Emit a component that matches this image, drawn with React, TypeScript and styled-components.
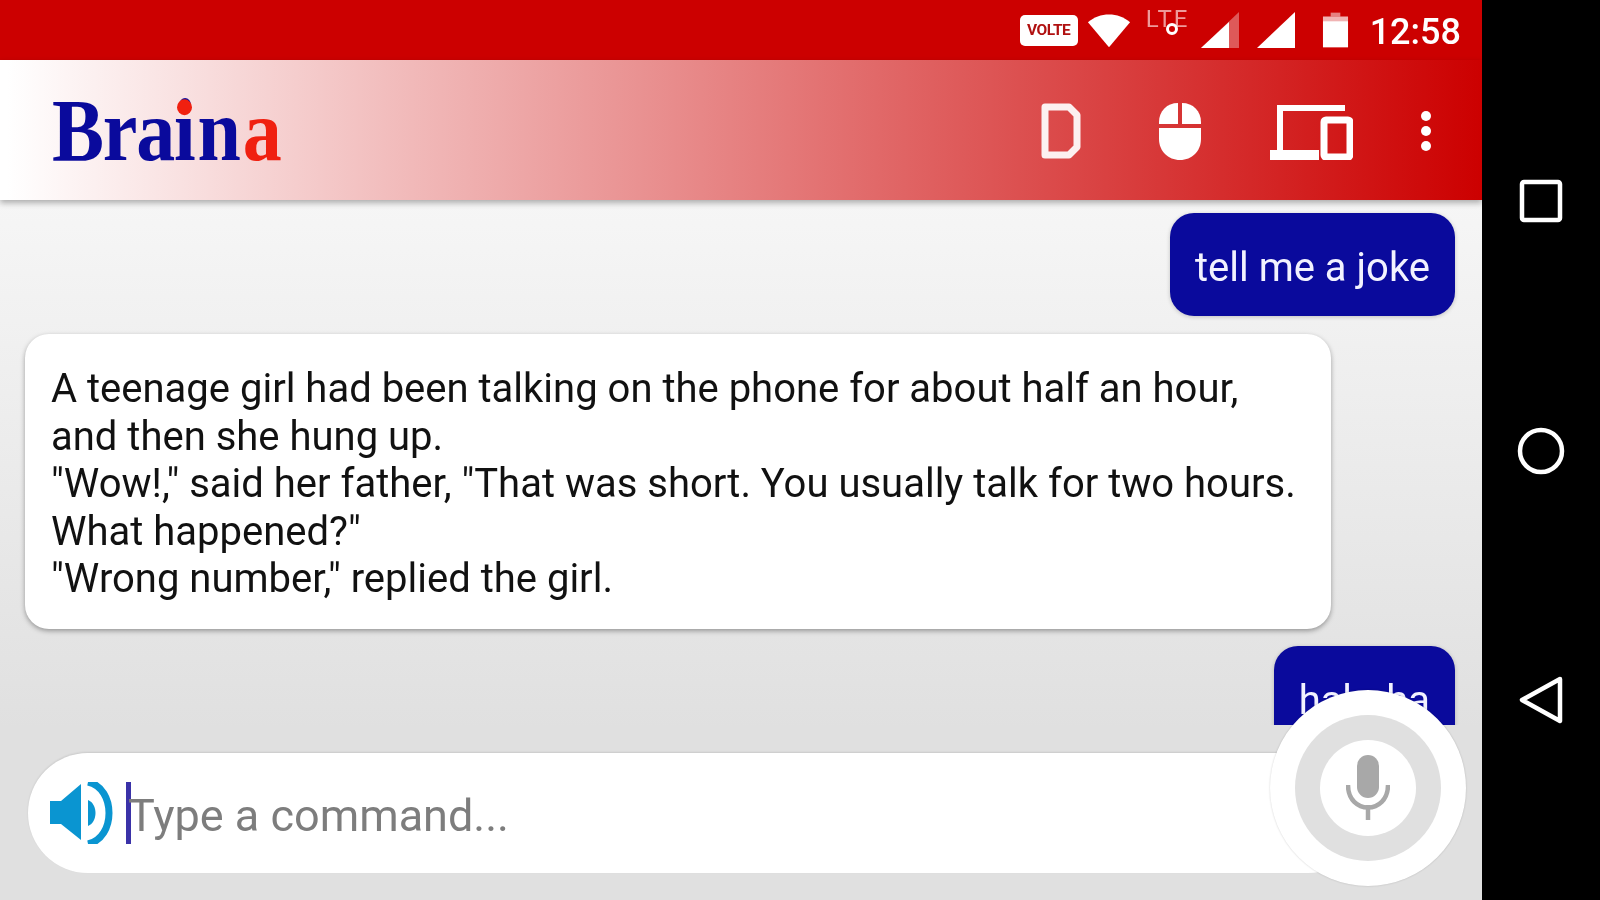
import styled, { createGlobalStyle, css } from "styled-components"

const GlobalStyle = createGlobalStyle`
  html, body {
    margin: 0;
    padding: 0;
    background: #000;
    overflow: hidden;
  }
  * {
    box-sizing: border-box;
  }
`

// the reference is an upscaled capture, so its parts all look a little soft
const soft = css`
  filter: blur(0.7px);
`

export default function App() {
  return (
    <Root>
      <GlobalStyle />
      <Screen>
        <StatusBar>
          <VolteBadge>VOLTE</VolteBadge>
          <StatusSlot $left={9}>
            <WifiIcon />
          </StatusSlot>
          <StatusSlot $left={15}>
            <LteIcon>
              LTE
              <LteDot />
            </LteIcon>
          </StatusSlot>
          <StatusSlot $left={11}>
            <SignalIcon faded />
          </StatusSlot>
          <StatusSlot $left={18}>
            <SignalIcon />
          </StatusSlot>
          <StatusSlot $left={27}>
            <BatteryIcon />
          </StatusSlot>
          <Clock>12:58</Clock>
        </StatusBar>
        <AppBar>
          <Logo>
            <LogoTight>Bra</LogoTight>
            <LogoLoose>in</LogoLoose>
            <LogoEnd>a</LogoEnd>
            <LogoDot />
          </Logo>
          <Actions>
            <DIcon />
            <MouseIcon />
            <DevicesIcon />
            <DotsIcon />
          </Actions>
        </AppBar>
        <Chat>
          <UserBubble>tell me a joke</UserBubble>
          <BotBubble>
            A teenage girl had been talking on the phone for about half an hour,
            <br />
            and then she hung up.
            <br />
            "Wow!," said her father, "That was short. You usually talk for two hours.
            <br />
            What happened?"
            <br />
            "Wrong number," replied the girl.
          </BotBubble>
          <UserBubble $last>hahaha</UserBubble>
        </Chat>
        <InputBar>
          <InputPill>
            <SpeakerIcon />
            <Caret />
            <Placeholder>Type a command...</Placeholder>
          </InputPill>
          <MicButton>
            <MicRing>
              <MicFace>
                <MicIcon />
              </MicFace>
            </MicRing>
          </MicButton>
        </InputBar>
      </Screen>
      <NavBar>
        <svg width="44" height="44" viewBox="0 0 44 44">
          <rect x="3" y="3" width="38" height="38" rx="2" fill="none" stroke="#fff" strokeWidth="4.5" />
        </svg>
        <svg width="50" height="50" viewBox="0 0 50 50">
          <circle cx="25" cy="25" r="21" fill="none" stroke="#fff" strokeWidth="4.5" />
        </svg>
        <svg width="46" height="50" viewBox="0 0 46 50">
          <path d="M42 4 L4 25 L42 46 Z" fill="none" stroke="#fff" strokeWidth="4.5" strokeLinejoin="round" />
        </svg>
      </NavBar>
    </Root>
  )
}

function WifiIcon() {
  return (
    <svg width="44" height="36" viewBox="0 0 46 36">
      <path d="M1 10 C13 -1 33 -1 45 10 L23 36 Z" fill="#fff" />
    </svg>
  )
}

function SignalIcon({ faded }: { faded?: boolean }) {
  return (
    <svg width="38" height="36" viewBox="0 0 38 36">
      {faded ? (
        <>
          <path d="M0 36 L38 0 V36 Z" fill="#fff" opacity="0.35" />
          <path d="M0 36 L28 10 V36 Z" fill="#fff" />
        </>
      ) : (
        <path d="M0 36 L38 0 V36 Z" fill="#fff" />
      )}
    </svg>
  )
}

function BatteryIcon() {
  return (
    <svg width="27" height="36" viewBox="0 0 28 36">
      <path d="M9 0 H19 V4 H9 Z" fill="#fff" opacity="0.5" />
      <path d="M1 4 H27 V10 H1 Z" fill="#fff" opacity="0.7" />
      <path d="M1 9 H27 V36 H1 Z" fill="#fff" />
    </svg>
  )
}

function DIcon() {
  return (
    <svg width="40" height="56" viewBox="0 0 40 56">
      <path
        d="M4 4 H28 L36 12 V44 L28 52 H4 Z"
        fill="none"
        stroke="#fff"
        strokeWidth="7"
        strokeLinejoin="round"
        opacity="0.92"
      />
    </svg>
  )
}

function MouseIcon() {
  return (
    <svg width="44" height="58" viewBox="0 0 44 58">
      <path d="M20 1 C9 1 1 9 1 20 V22 H20 Z" fill="#fff" />
      <path d="M24 1 C35 1 43 9 43 20 V22 H24 Z" fill="#fff" />
      <path d="M1 26 H43 V37 C43 49 34 58 22 58 C10 58 1 49 1 37 Z" fill="#fff" />
    </svg>
  )
}

function DevicesIcon() {
  return (
    <svg width="84" height="58" viewBox="0 0 84 58">
      <path d="M11 6 H76" stroke="#fff" strokeWidth="6" fill="none" />
      <path d="M11 3 V48" stroke="#fff" strokeWidth="6" fill="none" />
      <path d="M1 48 H50 V58 H1 Z" fill="#fff" />
      <rect x="55" y="18" width="26" height="37" rx="2" fill="none" stroke="#fff" strokeWidth="7" />
    </svg>
  )
}

function DotsIcon() {
  return (
    <svg width="16" height="44" viewBox="0 0 16 44">
      <circle cx="8" cy="7" r="5" fill="#fff" />
      <circle cx="8" cy="22" r="5" fill="#fff" />
      <circle cx="8" cy="37" r="5" fill="#fff" />
    </svg>
  )
}

function SpeakerIcon() {
  return (
    <svg width="64" height="62" viewBox="0 0 64 62">
      <path d="M0 19 H11 L31 2 V58 L11 42 H0 Z" fill="#0a95d1" />
      <path d="M38 0 C66 6 66 56 38 62" fill="none" stroke="#0a95d1" strokeWidth="7" />
      <path d="M38 18 C48 22 48 40 38 44 Z" fill="#0a95d1" />
    </svg>
  )
}

function MicIcon() {
  return (
    <svg width="44" height="66" viewBox="0 0 44 66">
      <rect x="11" y="0" width="22" height="43" rx="11" fill="#a8a8a8" />
      <path d="M2 30 C2 60 42 60 42 30" fill="none" stroke="#a8a8a8" strokeWidth="4.5" />
      <path d="M22 50 V65" stroke="#a8a8a8" strokeWidth="4.5" fill="none" />
    </svg>
  )
}

const Root = styled.div`
  display: flex;
  width: 1600px;
  height: 900px;
  overflow: hidden;
  font-family: Roboto, "Liberation Sans", sans-serif;
`

const Screen = styled.div`
  position: relative;
  display: flex;
  flex-direction: column;
  width: 1482px;
  height: 900px;
  background: linear-gradient(180deg, #f6f6f6 200px, #e0e0e0 730px, #dedede 100%);
`

const NavBar = styled.nav`
  display: flex;
  flex-direction: column;
  align-items: center;
  flex: 1;
  gap: 200px;
  padding-top: 179px;
  background: #000;

  svg {
    ${soft}
  }

  svg:nth-child(2) {
    margin-top: 3px;
  }

  svg:nth-child(3) {
    margin-top: -1px;
  }
`

const StatusBar = styled.div`
  display: flex;
  align-items: center;
  justify-content: flex-end;
  height: 60px;
  padding-right: 21px;
  background: #cc0000;
`

const StatusSlot = styled.div<{ $left: number }>`
  display: flex;
  margin-left: ${(p) => p.$left}px;
  ${soft}
`

const VolteBadge = styled.div`
  width: 58px;
  height: 31px;
  border-radius: 5px;
  background: #fff;
  color: #b01010;
  font-size: 15.5px;
  font-weight: 700;
  line-height: 31px;
  text-align: center;
  letter-spacing: -0.5px;
  ${soft}
`

const LteIcon = styled.div`
  position: relative;
  width: 44px;
  margin-bottom: 22px;
  color: #ee9a9a;
  font-size: 24px;
  line-height: 26px;
  letter-spacing: 2px;
  text-align: center;
`

const LteDot = styled.div`
  position: absolute;
  left: 20px;
  top: 17px;
  width: 12px;
  height: 12px;
  border-radius: 50%;
  border: 3px solid #fff;
`

const Clock = styled.div`
  margin-left: 21px;
  color: #fff;
  font-size: 36px;
  font-weight: 500;
  line-height: 60px;
  padding-top: 3px;
  ${soft}
`

const AppBar = styled.header`
  position: relative;
  z-index: 2;
  display: flex;
  align-items: center;
  justify-content: space-between;
  height: 140px;
  padding: 0 48px 0 52px;
  background: linear-gradient(90deg, #ffffff 0.5%, #cc0000 100%);
  box-shadow: 0 3px 6px rgba(0, 0, 0, 0.3);
`

const Logo = styled.div`
  position: relative;
  color: #0a0a9c;
  font-family: "Liberation Serif", serif;
  font-size: 78px;
  font-weight: 700;
  line-height: 1;
  margin-top: 2px;
  transform: scaleY(1.13);
  ${soft}
`

const LogoTight = styled.span`
  letter-spacing: -1.2px;
`

const LogoLoose = styled.span`
  letter-spacing: 1.8px;
`

const LogoEnd = styled.span`
  color: #f02010;
`

const LogoDot = styled.div`
  position: absolute;
  left: 125px;
  top: 11px;
  width: 15px;
  height: 14px;
  border-radius: 50%;
  background: #f02010;
`

const Actions = styled.div`
  display: flex;
  align-items: center;
  gap: 69px;
  margin-top: 1px;
  ${soft}

  svg:nth-child(1) {
    margin-right: 8px;
  }

  svg:nth-child(2) {
    margin-right: -2px;
  }

  svg:nth-child(3) {
    margin-right: -4px;
  }
`

const Chat = styled.main`
  display: flex;
  flex: 1;
  flex-direction: column;
  align-items: flex-start;
  min-height: 0;
  padding: 13px 27px 0 25px;
  overflow: hidden;
`

const UserBubble = styled.div<{ $last?: boolean }>`
  flex-shrink: 0;
  align-self: flex-end;
  height: 103px;
  margin-top: ${(p) => (p.$last ? "17px" : "0")};
  margin-bottom: ${(p) => (p.$last ? "-30px" : "0")};
  padding: 0 25px;
  border-radius: 24px;
  background: #0a0a9c;
  color: #f2f2ff;
  font-size: 40px;
  line-height: 110px;
  box-shadow: 0 1px 4px rgba(0, 0, 0, 0.2);
  ${soft}
`

const BotBubble = styled.div`
  flex-shrink: 0;
  width: 1306px;
  height: 295px;
  margin-top: 18px;
  padding: 31px 26px 0;
  border-radius: 24px;
  background: #fff;
  color: #111;
  font-size: 40px;
  line-height: 47.5px;
  white-space: nowrap;
  box-shadow: 0 2px 5px rgba(0, 0, 0, 0.35);
  ${soft}
`

const InputBar = styled.div`
  flex-shrink: 0;
  height: 175px;
  padding: 28px 0 0 28px;
  background: #e0e0e0;
`

const InputPill = styled.div`
  display: flex;
  align-items: center;
  width: 1340px;
  height: 120px;
  padding-left: 22px;
  border-radius: 60px;
  background: #fff;
  box-shadow: 0 -1px 2px rgba(0, 0, 0, 0.1);
  ${soft}
`

const Caret = styled.div`
  width: 5px;
  height: 62px;
  margin-left: 12px;
  background: #3a32a8;
`

const Placeholder = styled.div`
  margin: 6px 0 0 -3px;
  color: #7d7d7d;
  font-size: 45px;
  line-height: 62px;
`

const MicButton = styled.div`
  position: absolute;
  left: 1270px;
  top: 690px;
  display: flex;
  align-items: center;
  justify-content: center;
  width: 196px;
  height: 196px;
  border-radius: 50%;
  background: #fff;
  box-shadow: 0 0 2px rgba(0, 0, 0, 0.2);
  ${soft}
`

const MicRing = styled.div`
  display: flex;
  align-items: center;
  justify-content: center;
  width: 146px;
  height: 146px;
  border-radius: 50%;
  background: #e0e0e0;
`

const MicFace = styled.div`
  display: flex;
  align-items: center;
  justify-content: center;
  width: 96px;
  height: 96px;
  border-radius: 50%;
  background: #fff;
`
